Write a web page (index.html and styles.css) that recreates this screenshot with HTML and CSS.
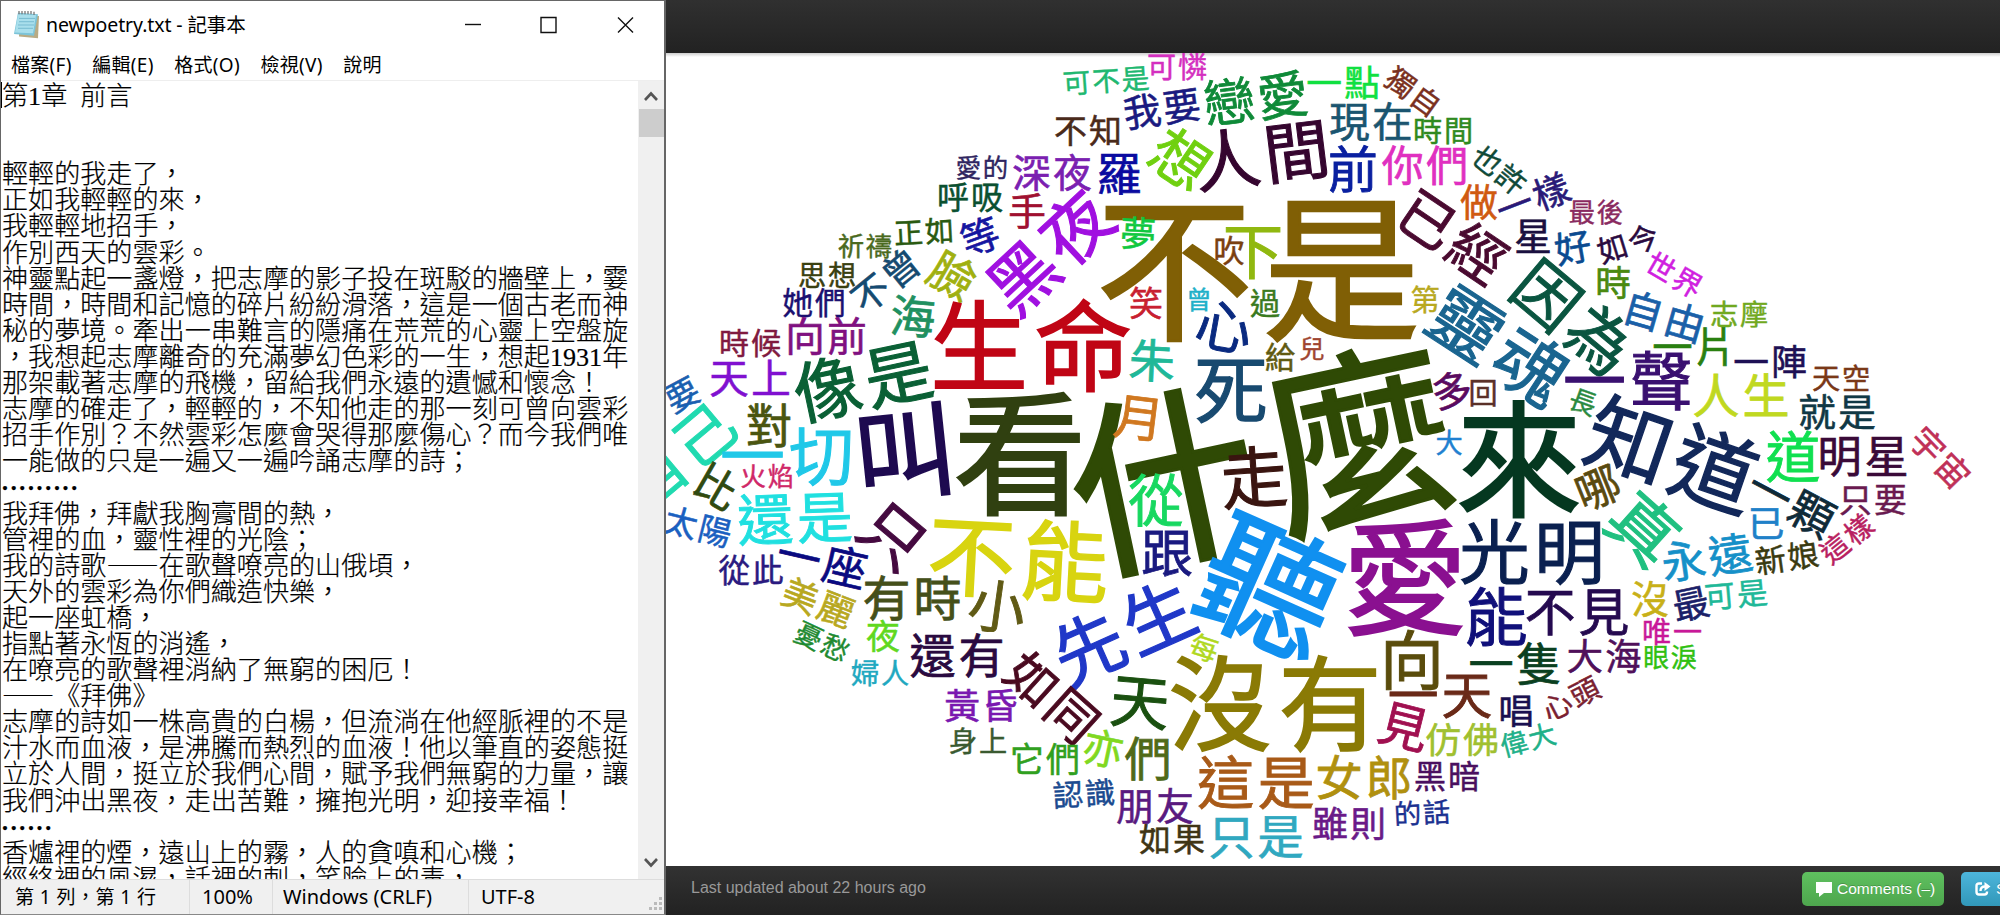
FILE: index.html
```
<!DOCTYPE html>
<html lang="zh-Hant">
<head>
<meta charset="utf-8">
<title>newpoetry.txt - 記事本</title>
<link rel="stylesheet" href="styles.css">
</head>
<body>
<div class="desktop">
  <section class="notepad">
    <header class="titlebar">
      <svg class="app-icon" viewBox="0 0 26 34" width="26" height="28" preserveAspectRatio="none">
        <path d="M6 5 L25 6 L24 33 L5 31Z" fill="#b9ab84"/>
        <path d="M4 2 L24 4 L20 30 L0 28Z" fill="#7cc4d8"/>
        <path d="M4 4 L22 5 L19 27 L1 26Z" fill="#a9dfec"/>
        <path d="M5 9H21M5 13H20M4 17H20M4 21H19" stroke="#72b9cd" stroke-width="1"/>
        <path d="M5 0V4M8 0V4M11 0V4M14 0V4M17 0V4M20 1V5" stroke="#777" stroke-width="1.3"/>
      </svg>
      <h1 class="title">newpoetry.txt - 記事本</h1>
      <svg class="win-buttons" width="180" height="24" viewBox="0 0 180 24" fill="none" stroke="#111" stroke-width="1.4">
        <path d="M3 11.5H19"/><path d="M79 4.5H94V19.5H79Z"/><path d="M156 4.5L171 19.5M171 4.5L156 19.5"/>
      </svg>
    </header>
    <nav class="menubar"><span>檔案(F)</span><span>編輯(E)</span><span>格式(O)</span><span>檢視(V)</span><span>說明</span></nav>
    <div class="editor">
      <pre class="document">第1章 前言


輕輕的我走了，
正如我輕輕的來，
我輕輕地招手，
作別西天的雲彩。
神靈點起一盞燈，把志摩的影子投在斑駁的牆壁上，霎
時間，時間和記憶的碎片紛紛滑落，這是一個古老而神
秘的夢境。牽出一串難言的隱痛在荒荒的心靈上空盤旋
，我想起志摩離奇的充滿夢幻色彩的一生，想起1931年
那架載著志摩的飛機，留給我們永遠的遺憾和懷念！
志摩的確走了，輕輕的，不知他走的那一刻可曾向雲彩
招手作別？不然雲彩怎麼會哭得那麼傷心？而今我們唯
一能做的只是一遍又一遍吟誦志摩的詩；
<span class="dots">•••••••••</span>
我拜佛，拜獻我胸膏間的熱，
管裡的血，靈性裡的光陰；
我的詩歌<span class="dash">——</span>在歌聲嘹亮的山俄頃，
天外的雲彩為你們織造快樂，
起一座虹橋，
指點著永恆的消遙，
在嘹亮的歌聲裡消納了無窮的困厄！
<span class="dash">——</span>《拜佛》
志摩的詩如一株高貴的白楊，但流淌在他經脈裡的不是
汁水而血液，是沸騰而熱烈的血液！他以筆直的姿態挺
立於人間，挺立於我們心間，賦予我們無窮的力量，讓
我們沖出黑夜，走出苦難，擁抱光明，迎接幸福！
<span class="dots">••••••</span>
香爐裡的煙，遠山上的霧，人的貪嗔和心機；
經絡裡的風濕，話裡的刺，笑臉上的毒，</pre>
      <div class="scrollbar">
        <svg width="14" height="10" viewBox="0 0 14 10"><path d="M1 9L7 2.5L13 9" fill="none" stroke="#555" stroke-width="2.6"/></svg>
        <div class="thumb"></div>
        <svg class="down" width="14" height="10" viewBox="0 0 14 10"><path d="M1 1L7 7.5L13 1" fill="none" stroke="#555" stroke-width="2.6"/></svg>
      </div>
    </div>
    <footer class="statusbar">
      <span class="pos">第 1 列，第 1 行</span><span class="zoom">100%</span><span class="eol">Windows (CRLF)</span><span class="enc">UTF-8</span>
      <svg class="grip" width="16" height="14" viewBox="0 0 16 14" fill="#bbb"><path d="M11 0h3v3h-3zM6 5h3v3h-3zM11 5h3v3h-3zM1 10h3v3h-3zM6 10h3v3h-3zM11 10h3v3h-3z"/></svg>
    </footer>
  </section>
  <main class="viewer">
    <div class="topbar"></div>
    <svg class="cloud" id="cloud" viewBox="666 53 1334 813"></svg>
    <footer class="bottombar">
      <span class="updated">Last updated about 22 hours ago</span>
      <span class="btn comments"><svg width="16" height="15" viewBox="0 0 16 15"><path d="M0 0H16V11H8L3 15V11H0Z" fill="#fff"/></svg>Comments (–)</span>
      <span class="btn share"><svg width="16" height="14" viewBox="0 0 16 14" fill="none" stroke="#fff" stroke-width="2.4"><path d="M7 1.5H4Q1.5 1.5 1.5 4V10Q1.5 12.5 4 12.5H9.5Q12 12.5 12 10V9.5"/><path d="M5.5 9Q5.5 4.5 10 4.5"/><path d="M9.5 0L15.5 4.5L9.5 9Z" fill="#fff" stroke="none"/></svg>Share</span>
    </footer>
  </main>
</div>
<script src="cloud.js"></script>
</body>
</html>
```
FILE: styles.css
```
* { box-sizing: border-box; }
body { margin: 0; background: #262626; font-family: "Noto Sans", "Noto Sans CJK TC", sans-serif; }
.desktop { display: flex; width: 2000px; height: 915px; overflow: hidden; }
.notepad { display: flex; flex: none; flex-direction: column; width: 666px; height: 915px; border: 1px solid #666; border-right-width: 2px; border-bottom-color: #888; background: #fff; color: #000; }
.titlebar { display: flex; align-items: center; height: 48px; padding: 0 22px 0 13px; }
.title { flex: 1; margin: -3px 0 0 6px; font-size: 19.5px; font-weight: 400; letter-spacing: -0.1px; }
.menubar { display: flex; gap: 20.5px; height: 32px; padding: 0 0 2px 10px; align-items: center; font-size: 19px; letter-spacing: 0.3px; border-bottom: 1px solid #eee; }
.menubar span, .title { white-space: nowrap; }
.editor { display: flex; flex: 1; min-height: 0; }
.document { position: relative; flex: 1; margin: 0; padding: 3px 0 0 1px; overflow: hidden; font-family: "Liberation Serif", "Noto Sans CJK TC", sans-serif; font-size: 26.1px; line-height: 26.1px; font-weight: 300; word-spacing: 6.5px; -webkit-text-stroke: 0.2px #000; }
.document::before { content: ""; position: absolute; left: 0; top: 1px; width: 1px; height: 26px; background: #000; }
.dash { font-family: "Noto Sans CJK TC", sans-serif; line-height: 0; }
.dots { font-size: 17px; letter-spacing: 2.7px; vertical-align: 2px; line-height: 0; }
.scrollbar { display: flex; flex-direction: column; align-items: center; width: 26px; padding: 10px 0 11px; background: #f0f0f0; }
.thumb { width: 25px; height: 28px; margin-top: 8px; background: #cdcdcd; }
.down { margin-top: auto; }
.statusbar { display: flex; align-items: center; height: 35px; background: #f0f0f0; border-top: 1px solid #ddd; font-size: 20px; white-space: nowrap; }
.statusbar span { height: 34px; line-height: 34px; border-right: 1px solid #ddd; padding-left: 12px; }
.statusbar .pos { width: 189px; padding-left: 14px; font-size: 19px; letter-spacing: 0.45px; }
.statusbar .zoom { width: 83px; }
.statusbar .eol { width: 196px; padding-left: 10px; }
.statusbar .enc { flex: 1; border: 0; }
.grip { align-self: flex-end; margin-bottom: 3px; }
.viewer { display: flex; flex-direction: column; flex: 1; min-width: 0; overflow: hidden; }
.topbar { height: 53px; background: linear-gradient(#303030, #222); }
.cloud { display: block; width: 1334px; height: 813px; background: linear-gradient(#ccc, #fff 4px); font-family: "Noto Sans CJK TC", sans-serif; text-anchor: middle; }
.bottombar { display: flex; height: 49px; padding: 6px 0 0 25px; background: linear-gradient(#323232, #222); font-family: "Liberation Sans", sans-serif; }
.updated { flex: none; width: 1111px; padding-top: 7px; font-size: 16px; color: #999; }
.btn { display: flex; flex: none; align-items: center; gap: 5px; height: 34px; padding-left: 14px; border-radius: 5px; color: #fff; font-size: 15.5px; white-space: nowrap; text-shadow: 0 -1px 0 rgba(0, 0, 0, 0.2); }
.comments { width: 142px; background: linear-gradient(#5fc05f, #4ea64e); }
.share { width: 94px; margin-left: 17px; background: linear-gradient(#4db6dc, #3197b8); }
```
FILE: cloud.js
```
// text, centre x, centre y, advance, angle in degrees, colour
const words = [
["可不是",1106,81,29.5,-4,"#20b870"],["可憐",1177,67,31,0,"#d42fc0"],["不知",1088,131,35,0,"#4a2a1a"],["我要",1162,109,40,-8,"#1a1a80"],
["戀愛",1256,99,54,-7,"#0f8a38"],["一點",1343,83,38,0,"#10e040"],["獨自",1413,92,31,36,"#7a3020"],["愛的",982,168,27,0,"#2f2560"],
["深夜",1052,173,41,0,"#7a20b0"],["羅",1119,175,48,0,"#0a0aa0"],["想",1180,160,62,34,"#70d010"],["人間",1262,156,70,-7,"#35052f"],
["現在",1371,122,43,0,"#1a5570"],["時間",1443,131,31,0,"#2f8a20"],["前",1353,170,53,0,"#0a20a0"],["你們",1425,166,44.5,0,"#e030c0"],
["也許",1499,170,31,39,"#104a38"],["做",1479,202,40,0,"#d05a10"],["一樣",1533,199,39,-21,"#2a1a78"],["最後",1596,212,28,0,"#8a2a60"],
["黑夜",1050,253,73,-43,"#a010e0"],["不是",1258,271,167,0,"#805f05"],["吹",1229,251,33,0,"#7a4010"],["下",1253,252,64,0,"#90b810"],
["夢",1138,234,38,3,"#10c840"],["已經",1452,237,60,34,"#4a0a30"],["星",1533,236,40,0,"#1a1040"],["好",1573,248,39,-10,"#0a4a90"],
["如今",1628,244,32,-17,"#2a0a40"],["世界",1674,275,31,30,"#d020e0"],["時",1613,283,38,0,"#4a8a10"],["呼吸",970,197,34,0,"#0a5030"],
["手",1027,211,40,0,"#a01030"],["正如",924,232,31,-3,"#2a5a10"],["等",980,237,41,-20,"#1515a0"],["祈禱",865,246,28,0,"#4a6a20"],
["不曾",886,281,39,-39,"#154a70"],["臉",952,276,49,30,"#a0b010"],["思想",827,276,30,0,"#3a4010"],["她們",814,303,32.5,0,"#1a1070"],
["海",913,317,48,5,"#209060"],["時候",750,343,32,0,"#801a40"],["向前",826,337,42,0,"#801080"],["天上",750,379,42,0,"#8010d0"],
["像是",863,382,72,-12,"#0a6035"],["生命",1031,347,104,0,"#c00515"],["要",682,395,36,-28,"#1a60b0"],["自己",680,456,64,-40,"#20dab0"],
["對",769,426,49,0,"#4a5510"],["一切",787,456,69,0,"#20c8e8"],["叫",905,453,109,-6,"#1e0a50"],["看",1020,455,142,0,"#304010"],
["什麼",1262,462,201,-12,"#2f4a05"],["笑",1146,304,36,0,"#c82030"],["曾",1199,300,27,0,"#20b0c8"],["心",1224,327,60,10,"#0a2a80"],
["過",1265,303,32,0,"#3a7a20"],["第",1425,300,31,0,"#b8a820"],["朱",1152,361,49,3,"#20b898"],["月",1139,418,53,7,"#d07820"],
["死",1231,391,78,0,"#184a70"],["給",1280,357,32,0,"#605a10"],["兒",1312,349,27,0,"#a04530"],["靈魂",1498,346,77,33,"#1a6590"],
["因為",1573,318,69,40,"#0a5540"],["自由",1664,317,43,16,"#1a60a8"],["志摩",1739,315,30,0,"#70a820"],["一片",1694,347,43,0,"#2a8010"],
["一聲",1628,381,67,0,"#3a1070"],["一陣",1770,362,38,0,"#1e1055"],["天空",1841,379,30,0,"#7a3818"],["人生",1741,396,50,0,"#c0d820"],
["就是",1837,412,40,0,"#103845"],["長",1583,402,29,20,"#2a8a40"],["多",1452,391,43,-8,"#5a0a60"],["回",1483,393,31,0,"#5a3028"],
["大",1449,443,29,0,"#2080d0"],["來",1519,461,134,0,"#053820"],["知道",1672,456,90,19,"#12285a"],["道",1793,457,58,0,"#10e050"],
["明星",1863,457,47,0,"#3a0a38"],["宇宙",1940,458,36,46,"#c03058"],["哪",1598,488,47,-22,"#5a4a10"],["真",1643,529,73,42,"#20c080"],
["一顆",1791,503,47,28,"#0f2a38"],["已",1766,524,39,0,"#2080c8"],["只要",1873,500,35,0,"#6a1a50"],["這樣",1847,539,30,-39,"#b82060"],
["新娘",1787,558,33,-8,"#3a3a10"],["永遠",1707,558,47,-8,"#1590c8"],["可是",1736,595,32.5,-5,"#20b898"],["最",1691,604,39,-12,"#1a2068"],
["沒",1650,599,40,0,"#c8b018"],["唯一",1672,632,31,0,"#c81898"],["眼淚",1670,658,27.5,0,"#30c010"],["大海",1604,657,38.5,0,"#50105a"],
["心頭",1571,699,31,-27,"#7a2030"],["光明",1532,553,75,0,"#0a2050"],["能",1496,617,67,0,"#10107a"],["不見",1577,612,54,0,"#250a50"],
["一隻",1515,665,48,0,"#0a4020"],["唱",1516,711,38,0,"#1a1050"],["偉大",1528,740,29,-15,"#20b088"],["仿佛",1462,740,38,0,"#a0c030"],
["一天",1440,695,54,0,"#6a2a18"],["向",1412,661,68,0,"#5a4c0c"],["見",1404,727,53,14,"#a01050"],["愛",1405,579,133,0,"#8a1090"],
["聽",1269,588,145,24,"#1090f0"],["走",1254,478,71,-4,"#3a1510"],["從",1156,501,59,0,"#18d860"],["跟",1167,553,55,0,"#1a1a80"],
["先生",1124,633,76,-24,"#2038c8"],["每",1204,648,30,18,"#b0d820"],["沒有",1275,705,110,0,"#8a7a05"],["天",1140,702,63,5,"#1a5010"],
["們",1148,759,50,0,"#506a18"],["亦",1103,749,43,12,"#80d820"],["認識",1084,794,32,-4,"#1a4a90"],["朋友",1155,806,40,0,"#5a1a80"],
["如果",1172,839,34,0,"#403515"],["只是",1256,837,49,0,"#30a8c0"],["這是",1256,783,60.5,0,"#a85a18"],["女郎",1364,778,50,0,"#b0900f"],
["黑暗",1447,776,34,0,"#4a1060"],["雖則",1349,824,38,0,"#6a1a88"],["的話",1422,813,29,-3,"#1a3090"],["不能",1018,560,93.5,3,"#d8d410"],
["只",893,536,68,40,"#450a40"],["小",997,607,61,8,"#605a15"],["有時",912,598,51,0,"#45501a"],["一座",822,562,47,13,"#0a0a80"],
["還是",795,519,59.5,-2,"#20e0e0"],["火焰",767,477,27.5,0,"#d02868"],["比",716,487,46,30,"#304a10"],["太陽",698,527,35,14,"#1a60c0"],
["從此",751,570,33.5,0,"#2a1a80"],["美麗",818,603,38,21,"#b8a820"],["憂愁",822,642,29,25,"#208a30"],["夜",883,637,36,0,"#60d820"],
["婦人",880,674,30,0,"#20a8c0"],["還有",957,656,49,0,"#2a0a40"],["如同",1052,698,54,42,"#4a0a20"],["黃昏",981,706,38,0,"#7a18b0"],
["身上",978,742,30,0,"#3a5a30"],["它們",1045,760,36,0,"#30a020"]
];
const svg = document.getElementById("cloud");
for (const [text, x, y, advance, angle, colour] of words) {
  const size = advance * 0.94;
  const node = document.createElementNS("http://www.w3.org/2000/svg", "text");
  node.textContent = text;
  node.setAttribute("x", [...text].map((_, i) => (i - (text.length - 1) / 2) * advance).join(" "));
  node.setAttribute("y", size * 0.365);
  node.setAttribute("font-size", size);
  node.setAttribute("fill", colour);
  node.setAttribute("stroke", colour);
  node.setAttribute("stroke-width", size * 0.016);
  node.setAttribute("transform", `translate(${x} ${y}) rotate(${angle})`);
  svg.appendChild(node);
}
```
